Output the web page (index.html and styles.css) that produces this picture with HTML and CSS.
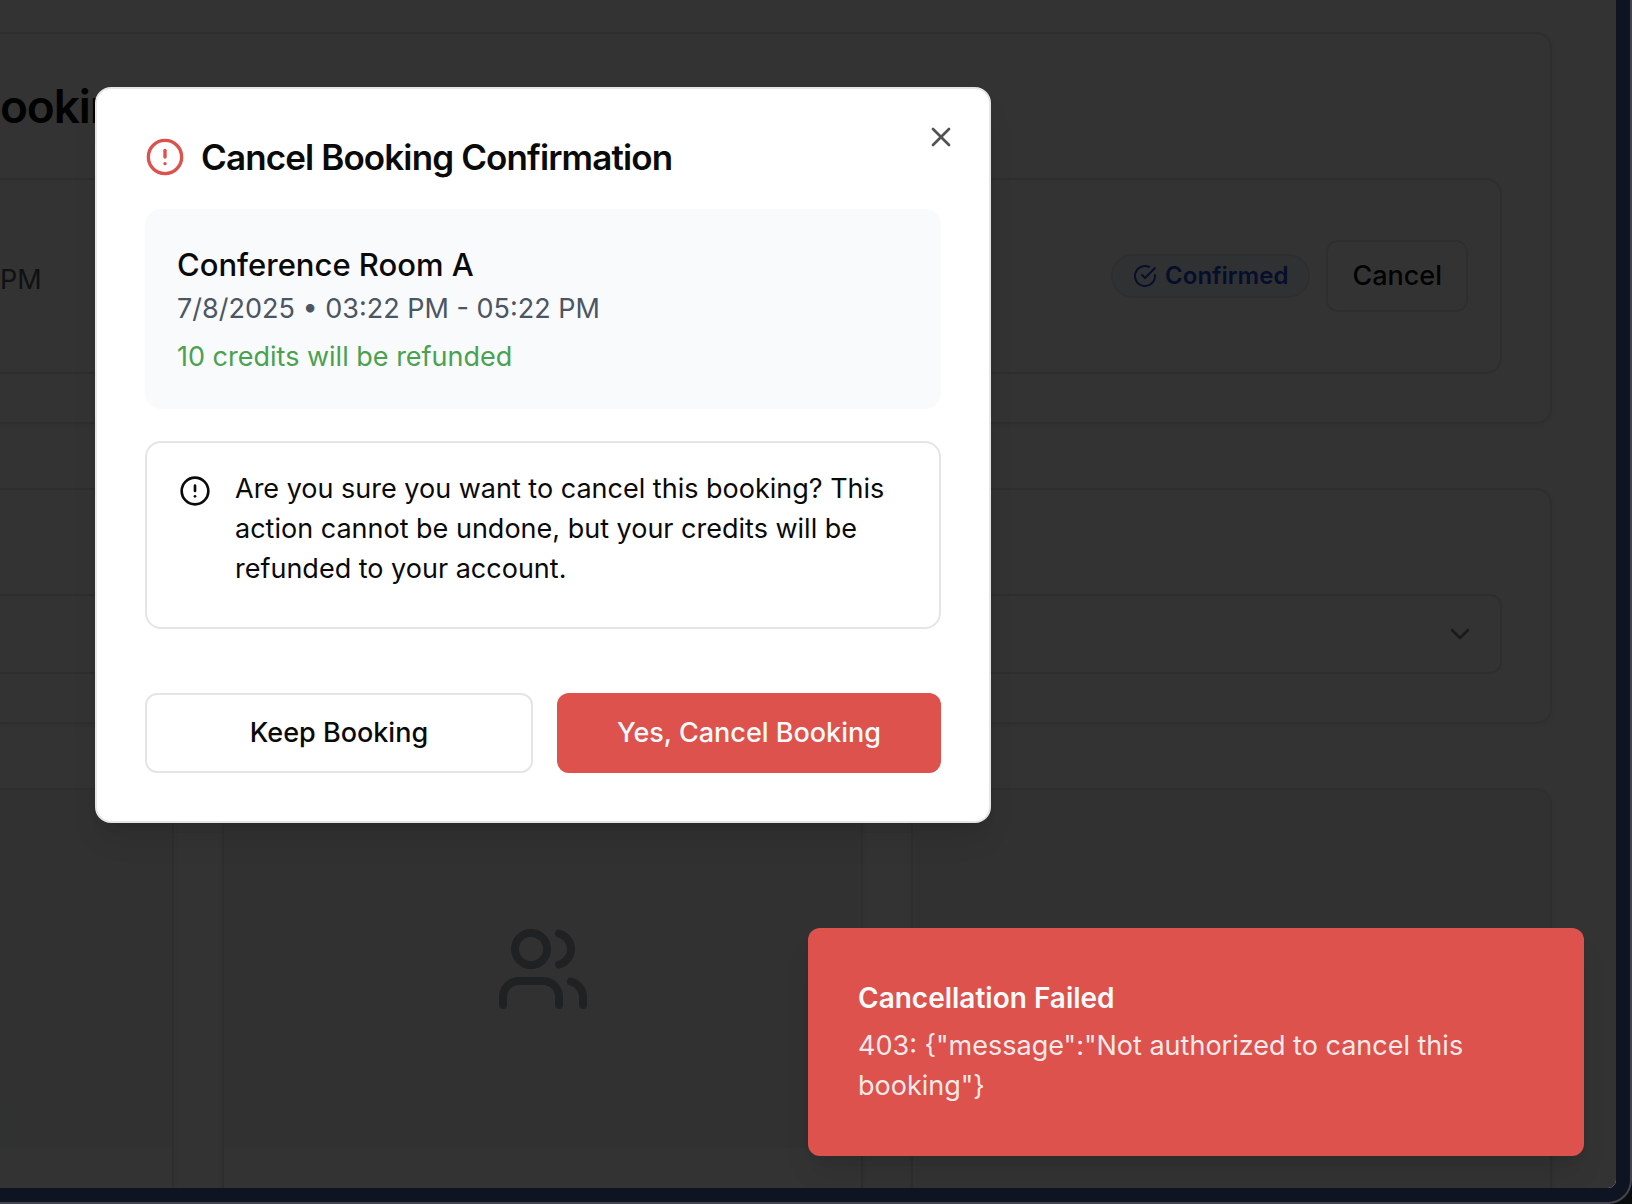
FILE: index.html
```html
<!DOCTYPE html>
<html lang="en">
<head>
<meta charset="utf-8">
<meta name="viewport" content="width=device-width, initial-scale=1">
<title>Cancel Booking Confirmation</title>
<link rel="stylesheet" href="styles.css">
</head>
<body>
<div class="frame">
  <div class="screen">
    <main class="page">
      <section class="card bookings">
        <h1 class="page-title">ookings</h1>
        <div class="booking">
          <p class="booking-time">PM</p>
          <div class="booking-actions">
            <span class="badge">
              <svg class="icon icon-xs" viewBox="0 0 24 24" aria-hidden="true"><path d="M22 11.08V12a10 10 0 1 1-5.93-9.14"/><path d="m9 11 3 3L22 4"/></svg>
              Confirmed
            </span>
            <button class="button button-outline button-small" type="button">Cancel</button>
          </div>
        </div>
      </section>

      <section class="card filter">
        <button class="select" type="button" aria-label="Filter">
          <svg class="icon icon-sm icon-faded" viewBox="0 0 24 24" aria-hidden="true"><path d="m6 9 6 6 6-6"/></svg>
        </button>
      </section>

      <div class="rooms">
        <article class="card room room-first"><div class="room-media room-media-first"></div></article>
        <article class="card room">
          <div class="room-media">
            <svg class="icon icon-xl" viewBox="0 0 24 24" aria-hidden="true"><path d="M16 21v-2a4 4 0 0 0-4-4H6a4 4 0 0 0-4 4v2"/><circle cx="9" cy="7" r="4"/><path d="M22 21v-2a4 4 0 0 0-3-3.87"/><path d="M16 3.13a4 4 0 0 1 0 7.75"/></svg>
          </div>
        </article>
        <article class="card room"><div class="room-media"></div></article>
      </div>
    </main>

    <div class="overlay"></div>

    <div class="dialog" role="dialog" aria-modal="true" aria-labelledby="dialog-title">
      <header class="dialog-header">
        <svg class="icon icon-md icon-danger" viewBox="0 0 24 24" aria-hidden="true"><circle cx="12" cy="12" r="10"/><path d="M12 8v4"/><path d="M12 16h.01"/></svg>
        <h2 class="dialog-title" id="dialog-title">Cancel Booking Confirmation</h2>
      </header>
      <div class="summary">
        <p class="summary-name">Conference Room A</p>
        <p class="summary-time">7/8/2025 • 03:22 PM - 05:22 PM</p>
        <p class="summary-refund">10 credits will be refunded</p>
      </div>
      <div class="notice" role="alert">
        <svg class="icon icon-sm notice-icon" viewBox="0 0 24 24" aria-hidden="true"><circle cx="12" cy="12" r="10"/><path d="M12 8v4"/><path d="M12 16h.01"/></svg>
        <p>Are you sure you want to cancel this booking? This action cannot be undone, but your credits will be refunded to your account.</p>
      </div>
      <footer class="dialog-footer">
        <button class="button button-outline" type="button">Keep Booking</button>
        <button class="button button-danger" type="button">Yes, Cancel Booking</button>
      </footer>
      <button class="dialog-close" type="button" aria-label="Close">
        <svg class="icon icon-sm" viewBox="0 0 24 24" aria-hidden="true"><path d="M18 6 6 18"/><path d="m6 6 12 12"/></svg>
      </button>
    </div>

    <div class="toast" role="status">
      <p class="toast-title">Cancellation Failed</p>
      <p class="toast-text">403: {"message":"Not authorized to cancel this booking"}</p>
    </div>
  </div>
</div>
</body>
</html>
```

FILE: styles.css
```css
:root {
  --ink: #0a0a0a;
  --muted: #4b5563;
  --line: #e5e5e5;
  --danger: #dd524c;
}

* {
  box-sizing: border-box;
}

body,
h1,
h2,
p {
  margin: 0;
}

body {
  background: #0a0d0d;
  color: var(--ink);
  font-family: Inter, "Liberation Sans", sans-serif;
  font-size: 27px;
  line-height: 40px;
}

button {
  color: inherit;
  font: inherit;
}

/* Window frame */
.frame {
  height: 100vh;
  padding: 0 14px 14px 0;
  border: solid #45454f;
  border-width: 0 2px 2px 0;
  border-radius: 0 0 24px 0;
  background: #0f1422;
}

.screen {
  position: relative;
  height: 100%;
  overflow: hidden;
  border-radius: 0 0 8px 0;
  background: #fcfcfc;
}

/* Icons */
.icon {
  display: block;
  flex: none;
  fill: none;
  stroke: currentColor;
  stroke-width: 2;
  stroke-linecap: round;
  stroke-linejoin: round;
}

.icon-xs { width: 24px; height: 24px; }
.icon-sm { width: 32px; height: 32px; }
.icon-md { width: 40px; height: 40px; }
.icon-xl { width: 96px; height: 96px; color: #9ca3af; }
.icon-faded { opacity: 0.5; }
.icon-danger { color: var(--danger); }

/* Page behind the dialog */
.page {
  display: flex;
  flex-direction: column;
  gap: 64px;
  height: 100%;
  padding: 32px 64px 0 0;
}

.card {
  border: 2px solid var(--line);
  border-radius: 16px;
  background: #fff;
  box-shadow: 0 2px 4px rgba(0, 0, 0, 0.05);
}

.bookings,
.filter,
.room-first {
  border-left: 0;
  border-top-left-radius: 0;
}

.bookings,
.filter {
  border-bottom-left-radius: 0;
  padding: 48px 48px 48px 0;
}

.page-title {
  margin-bottom: 48px;
  font-size: 46px;
  font-weight: 600;
  line-height: 48px;
  letter-spacing: -0.025em;
}

.booking {
  display: flex;
  align-items: center;
  justify-content: space-between;
  min-height: 196px;
  padding: 32px 32px 32px 0;
  border: 2px solid var(--line);
  border-left: 0;
  border-radius: 0 16px 16px 0;
}

.booking-time {
  padding-top: 8px;
  color: var(--muted);
}

.booking-actions {
  display: flex;
  align-items: center;
  gap: 16px;
}

.badge {
  display: flex;
  align-items: center;
  gap: 8px;
  height: 44px;
  padding: 0 20px;
  border: 2px solid var(--line);
  border-radius: 22px;
  background: #eff6ff;
  color: #1d4ed8;
  font-size: 24px;
  font-weight: 600;
  line-height: 32px;
}

.select {
  display: flex;
  align-items: center;
  justify-content: flex-end;
  width: 100%;
  height: 80px;
  margin-top: 56px;
  padding: 0 24px;
  border: 2px solid var(--line);
  border-left: 0;
  border-radius: 0 12px 12px 0;
  background: #fff;
}

.rooms {
  display: grid;
  flex: 1;
  grid-template-columns: 174px 1fr 1fr;
  gap: 48px;
}

.room {
  border-bottom: 0;
  border-bottom-left-radius: 0;
  border-bottom-right-radius: 0;
  overflow: hidden;
}

.room-media {
  display: flex;
  align-items: center;
  justify-content: center;
  height: 358px;
  background: #f5f5f5;
}

.room-media-first {
  background: radial-gradient(24px 72px at 0 100%, #eff5f2 60%, #f5f5f5);
}

/* Buttons */
.button {
  height: 80px;
  padding: 0 32px;
  border: 0;
  border-radius: 12px;
  font-weight: 500;
}

.button-outline {
  border: 2px solid var(--line);
  background: #fff;
}

.button-danger {
  background: var(--danger);
  color: #fafafa;
}

.button-small {
  height: 72px;
  padding: 0 24px;
}

/* Dialog */
.overlay {
  position: absolute;
  inset: 0;
  background: rgba(0, 0, 0, 0.8);
}

.dialog {
  position: absolute;
  top: 87px;
  left: 95px;
  display: flex;
  flex-direction: column;
  gap: 32px;
  width: 896px;
  padding: 48px;
  border: 2px solid var(--line);
  border-radius: 16px;
  background: #fff;
  box-shadow: 0 20px 30px -6px rgba(0, 0, 0, 0.1), 0 8px 12px -8px rgba(0, 0, 0, 0.1);
}

.dialog-header {
  display: flex;
  align-items: center;
  gap: 16px;
}

.dialog-title {
  font-size: 35px;
  font-weight: 600;
  line-height: 40px;
  letter-spacing: -0.025em;
}

.summary {
  padding: 32px;
  border-radius: 16px;
  background: #f9fafb;
}

.summary-name {
  font-size: 31px;
  font-weight: 500;
  line-height: 48px;
}

.summary-time {
  color: var(--muted);
}

.summary-refund {
  margin-top: 8px;
  color: #4aa150;
}

.notice {
  display: flex;
  gap: 24px;
  padding: 26px 32px 38px;
  border: 2px solid var(--line);
  border-radius: 16px;
}

.notice-icon {
  margin-top: 6px;
}

.dialog-footer {
  display: flex;
  gap: 24px;
  padding-top: 32px;
}

.dialog-footer .button {
  flex: 1;
}

.dialog-close {
  position: absolute;
  top: 32px;
  right: 32px;
  padding: 0;
  border: 0;
  background: none;
  opacity: 0.7;
}

/* Toast */
.toast {
  position: absolute;
  right: 32px;
  bottom: 32px;
  width: 776px;
  padding: 50px 66px 50px 50px;
  border-radius: 12px;
  background: var(--danger);
  color: #fafafa;
  box-shadow: 0 20px 30px -6px rgba(0, 0, 0, 0.1), 0 8px 12px -8px rgba(0, 0, 0, 0.1);
}

.toast-title {
  margin-bottom: 8px;
  font-size: 28px;
  font-weight: 600;
}

.toast-text {
  opacity: 0.9;
}
```
